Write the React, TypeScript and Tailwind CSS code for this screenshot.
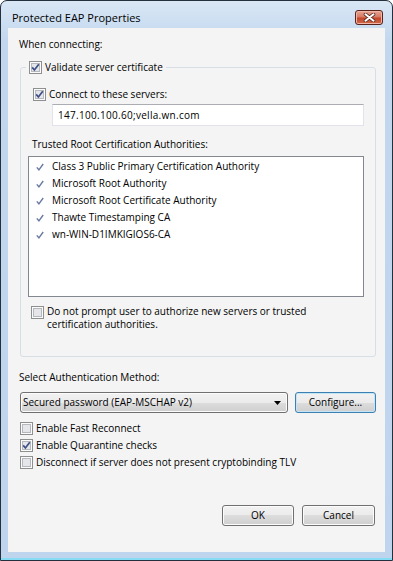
import React from "react";

const certs = [
  "Class 3 Public Primary Certification Authority",
  "Microsoft Root Authority",
  "Microsoft Root Certificate Authority",
  "Thawte Timestamping CA",
  "wn-WIN-D1IMKIGIOS6-CA",
];

function CheckBox({ checked }: { checked?: boolean }) {
  return (
    <svg width="13" height="13" viewBox="0 0 13 13" className="shrink-0">
      <rect x="0.5" y="0.5" width="12" height="12" fill="#fbfbfb" stroke="#8e8f8f" />
      <rect x="2.5" y="2.5" width="8" height="8" fill="#e4e6e9" stroke="#b5b9be" />
      {checked && (
        <path d="M3.2 6.4 L5.4 9 L9.8 3.2" fill="none" stroke="#3d4f86" strokeWidth="1.7" />
      )}
    </svg>
  );
}

function ListCheck() {
  return (
    <svg width="10" height="10" viewBox="0 0 10 10" className="shrink-0">
      <path d="M1.8 5.4 L3.9 7.8 L8.2 2" fill="none" stroke="#6a7aa2" strokeWidth="1.4" />
    </svg>
  );
}

function CheckRow({ checked, label }: { checked?: boolean; label: string }) {
  return (
    <div className="flex items-center gap-[3px] h-[13px]">
      <CheckBox checked={checked} />
      <span>{label}</span>
    </div>
  );
}

const face =
  "h-[21px] rounded-[3px] border bg-[linear-gradient(#f2f2f2_0%,#ebebeb_50%,#dddddd_50%,#cfcfcf_100%)] flex items-center";
const btn = `${face} border-[#707070] shadow-[inset_0_0_0_1px_#fcfcfc] justify-center`;

export default function App() {
  return (
    <div className="w-[393px] h-[561px] flex flex-col border border-[#24303d] rounded-t-[7px] bg-[linear-gradient(#d9e7f5,#c2d7ee_40px,#bfd5ed)] font-['Open_Sans',sans-serif] text-[10px] leading-[13px] text-black overflow-hidden">
      {/* title bar */}
      <div className="h-[27px] shrink-0 flex items-center justify-between pl-[11px] pr-[9px] pt-[5px]">
        <span className="text-[11px]">Protected EAP Properties</span>
        <div className="w-[28px] h-[15px] rounded-[3px] border border-[#57231b] bg-[linear-gradient(#e8a493_0%,#d77a63_45%,#c4462b_55%,#cf6a4a_100%)] shadow-[inset_0_0_0_1px_#f0b7a8] flex items-center justify-center">
          <svg width="13" height="9" viewBox="0 0 13 9">
            <path d="M2.5 1.3 L10.5 7.7 M10.5 1.3 L2.5 7.7" stroke="#5a2b25" strokeWidth="3.6" strokeLinecap="round" />
            <path d="M2.5 1.3 L10.5 7.7 M10.5 1.3 L2.5 7.7" stroke="#ffffff" strokeWidth="2" strokeLinecap="round" />
          </svg>
        </div>
      </div>

      {/* client area */}
      <div className="mx-[7px] h-[524px] shrink-0 bg-[#f4f4f4] flex flex-col pt-[10px]">
        <div className="ml-[11px] h-[13px]">When connecting:</div>

        <fieldset className="mt-[10px] ml-[12px] mr-[9px] border border-[#d5dfe5] rounded-[3px] p-0 pb-[25px] flex flex-col">
          <legend className="ml-[5px] px-[3px] h-[13px]">
            <CheckRow checked label="Validate server certificate" />
          </legend>

          <div className="mt-[14px] ml-[12px]">
            <CheckRow checked label="Connect to these servers:" />
          </div>
          <div className="mt-[3px] ml-[31px] w-[312px] h-[22px] bg-white border border-[#e2e3ea] border-t-[#abadb3] flex items-center pl-[5px] tracking-[0.3px]">
            147.100.100.60;vella.wn.com
          </div>

          <div className="mt-[12px] ml-[11px] h-[13px]">Trusted Root Certification Authorities:</div>
          <div className="mt-[5px] ml-[7px] w-[336px] h-[141px] bg-white border border-[#828790] pt-[1px] flex flex-col">
            {certs.map((c) => (
              <div key={c} className="h-[17px] flex items-center pl-[6px]">
                <div className="w-[17px] flex items-center">
                  <ListCheck />
                </div>
                <span>{c}</span>
              </div>
            ))}
          </div>

          <div className="mt-[8px] ml-[10px] flex items-start gap-[3px]">
            <div className="pt-[1px]">
              <CheckBox />
            </div>
            <span>
              Do not prompt user to authorize new servers or trusted
              <br />
              certification authorities.
            </span>
          </div>
        </fieldset>

        <div className="mt-[14px] ml-[11px] h-[13px]">Select Authentication Method:</div>
        <div className="mt-[8px] ml-[12px] flex gap-[7px]">
          <div className={`${face} border-[#707070] shadow-[inset_0_0_0_1px_#fcfcfc] w-[268px] justify-between pl-[2px] pr-[6px]`}>
            <span>Secured password (EAP-MSCHAP v2)</span>
            <svg width="7" height="4" viewBox="0 0 7 4">
              <path d="M0 0 H7 L3.5 4 Z" fill="#000" />
            </svg>
          </div>
          <div className={`${face} w-[81px] border-[#3c7fb1] shadow-[inset_0_0_0_1px_#c4e5f6] justify-center`}>
            Configure...
          </div>
        </div>

        <div className="mt-[9px] ml-[12px] flex flex-col gap-[4px]">
          <CheckRow label="Enable Fast Reconnect" />
          <CheckRow checked label="Enable Quarantine checks" />
          <CheckRow label="Disconnect if server does not present cryptobinding TLV" />
        </div>

        <div className="flex-1" />
        <div className="mb-[26px] mr-[10px] flex justify-end gap-[8px]">
          <div className={`${btn} w-[72px]`}>OK</div>
          <div className={`${btn} w-[73px]`}>Cancel</div>
        </div>
      </div>

      <div className="h-[6px] shrink-0" />
      <div className="h-[2px] shrink-0 bg-[#86dcf5]" />
    </div>
  );
}
